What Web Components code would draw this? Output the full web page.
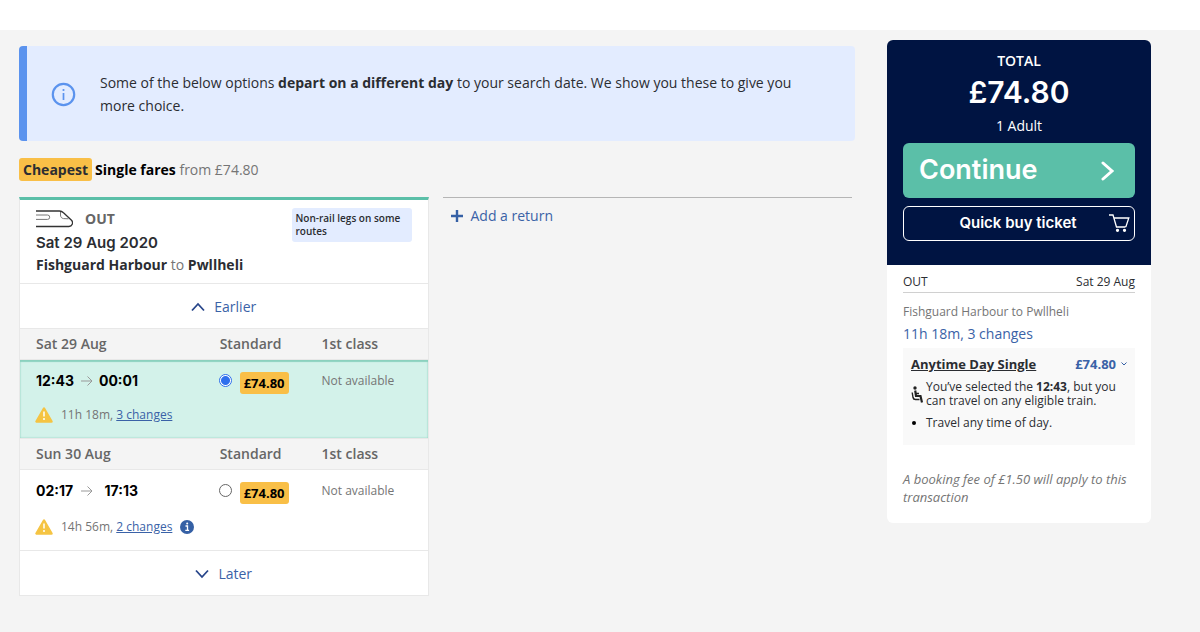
<!DOCTYPE html>
<html lang="en-GB">
<head>
<meta charset="utf-8">
<meta name="viewport" content="width=device-width, initial-scale=1">
<title>Choose your tickets</title>
<style>
  :root {
    --ink: #2b2d32;
    --grey: #757575;
    --blue: #3a62a7;
    --navy: #001442;
    --green: #5bbfa8;
    --amber: #f9bf47;
    --ice: #e3ecff;
    --line: #e8e8e8;
    --display: Inter, "Liberation Sans", sans-serif;
  }
  body {
    margin: 0;
    background: #f4f4f4;
    color: var(--ink);
    font: 14px/20px "Open Sans", "Noto Sans", sans-serif;
  }
</style>
</head>
<body>
<ticket-page>
  <info-banner>Some of the below options <b>depart on a different day</b> to your search date. We show you these to give you more choice.</info-banner>
  <fare-summary price="£74.80">Single fares</fare-summary>
  <journey-card slot="journey" direction="OUT" date="Sat 29 Aug 2020" from="Fishguard Harbour" to="Pwllheli" note="Non-rail legs on some routes">
    <fare-table></fare-table>
  </journey-card>
  <return-prompt slot="journey">Add a return</return-prompt>
  <basket-panel slot="basket" price="£74.80" passengers="1 Adult">
    <basket-leg direction="OUT" date="Sat 29 Aug" route="Fishguard Harbour to Pwllheli" duration="11h 18m, 3 changes" ticket="Anytime Day Single" price="£74.80">
      <span slot="seat">You’ve selected the <b>12:43</b>, but you can travel on any eligible train.</span>
      <span slot="terms">Travel any time of day.</span>
    </basket-leg>
    <span slot="fee">A booking fee of £1.50 will apply to this transaction</span>
  </basket-panel>
</ticket-page>

<script>
  class BaseElement extends HTMLElement {
    connectedCallback() {
      if (this.shadowRoot) return;
      this.attachShadow({ mode: "open" }).innerHTML =
        `<style>*{box-sizing:border-box}:host{display:block;box-sizing:border-box}button{font:inherit;cursor:pointer}${this.styles()}</style>${this.markup()}`;
    }
    attr(name) { return this.getAttribute(name) || ""; }
  }

  customElements.define("ticket-page", class extends BaseElement {
    styles() { return `
      header { height: 30px; background: #fff; }
      .page { display: flex; align-items: flex-start; gap: 32px; padding: 10px 49px 32px 19px; }
      main { flex: 1; min-width: 0; padding-top: 6px; }
      .journeys { display: grid; grid-template-columns: 1fr 1fr; gap: 14px; align-items: start; padding-right: 3px; }
      aside { flex: 0 0 264px; }`; }
    markup() { return `
      <header></header>
      <div class="page">
        <main><slot></slot><div class="journeys"><slot name="journey"></slot></div></main>
        <aside><slot name="basket"></slot></aside>
      </div>`; }
  });

  customElements.define("info-banner", class extends BaseElement {
    styles() { return `
      :host { display: flex; align-items: center; gap: 24px; padding: 25px 48px 24px 24px;
        background: var(--ice); border-left: 8px solid #5b93ee; border-radius: 4px; }
      svg { flex: none; }
      p { margin: 0; line-height: 23px; }`; }
    markup() { return `
      <svg width="25" height="25" viewBox="0 0 25 25" fill="none" stroke="#5b93ee" aria-hidden="true">
        <circle cx="12.5" cy="12.5" r="10.7" stroke-width="2.2"/>
        <path d="M12.5 11v7" stroke-width="1.7"/><circle cx="12.5" cy="8" r="1.1" fill="#5b93ee" stroke="none"/>
      </svg>
      <p><slot></slot></p>`; }
  });

  customElements.define("fare-summary", class extends BaseElement {
    styles() { return `
      :host { display: flex; align-items: center; gap: 3px; margin: 17px 0 16px; color: var(--grey); line-height: 23px; }
      .tag { padding: 0 4px; border-radius: 3px; background: var(--amber); color: var(--ink); font-weight: 700; }
      b { color: #000; }`; }
    markup() { return `<span class="tag">Cheapest</span><span><b><slot></slot></b> from ${this.attr("price")}</span>`; }
  });

  customElements.define("journey-card", class extends BaseElement {
    styles() { return `
      :host { background: #fff; border: 1px solid var(--line); border-top: 3px solid var(--green); }
      header { display: flex; justify-content: space-between; align-items: flex-start; padding: 6px 16px 7px 16px; }
      .dir { display: flex; align-items: center; gap: 12px; line-height: 25px; color: #666; font-weight: 700; }
      h2 { margin: 0; font: 600 15px/23px var(--display); }
      p { margin: 0; line-height: 22px; color: var(--grey); }
      p b { color: var(--ink); }
      .note { width: 120px; margin-top: 2px; padding: 4px; border-radius: 3px; background: var(--ice);
        font-size: 10px; line-height: 13px; font-weight: 600; }
      .more { display: flex; width: 100%; height: 45px; align-items: center; justify-content: center; gap: 9px;
        padding: 2px 0 0; background: none; border: 0; border-top: 1px solid var(--line); color: var(--blue); }`; }
    markup() { return `
      <header>
        <div>
          <div class="dir">
            <svg width="37" height="18" viewBox="0 0 37 18" fill="none" stroke="#333" stroke-width="1.3" aria-hidden="true">
              <path d="M0 1h23.500c2 0 3 .8 4 1.800l8 7.400c2.200 2.500.6 6.300-2.600 6.300H0"/>
              <path d="M0 5h11.500a2.200 2.200 0 0 1 0 4.400H0M24.500 2v3c0 2 1 3.200 3 3.600l5 .2" stroke="#777" stroke-width="1"/>
            </svg>${this.attr("direction")}
          </div>
          <h2>${this.attr("date")}</h2>
          <p><b>${this.attr("from")}</b> to <b>${this.attr("to")}</b></p>
        </div>
        <div class="note">${this.attr("note")}</div>
      </header>
      <button class="more" type="button">
        <svg width="14" height="10" viewBox="0 0 14 10" fill="none" stroke="#27458a" stroke-width="1.800" aria-hidden="true"><path d="M1 8.500 7 2l6 6.500"/></svg>Earlier
      </button>
      <slot></slot>
      <button class="more" type="button">
        <svg width="14" height="10" viewBox="0 0 14 10" fill="none" stroke="#27458a" stroke-width="1.800" aria-hidden="true"><path d="M1 1.500 7 8l6-6.500"/></svg>Later
      </button>`; }
  });

  customElements.define("fare-table", class extends BaseElement {
    styles() { return `
      table { width: 100%; table-layout: fixed; border-collapse: separate; border-spacing: 0; }
      .c1 { width: 49%; } .c2 { width: 25%; }
      th { height: 32px; padding: 0; background: #f4f4f4; border: solid var(--line); border-width: 1px 0; text-align: left; font-weight: 600; color: #666; }
      th:first-child, td:first-child { padding-left: 16px; }
      td { padding: 10px 0 11px; vertical-align: top; font-size: 12px; line-height: 22px; color: var(--grey); }
      .chosen { background: #d3f2ea; box-shadow: inset 0 0 2px #86cfbc, inset 0 2px 1px #8dd2c0; }
      .times { display: flex; align-items: center; height: 22px; gap: 5px; color: #000; font: 700 14px/22px var(--display); }
      time { min-width: 40px; }
      time:last-child { text-align: right; }
      .trip { display: flex; align-items: center; margin-top: 11px; height: 24px; }
      .trip.extra { margin-top: 13px; }
      .trip > svg:first-child { margin: 0 8px 0 -1px; }
      .tip { display: flex; margin: 0 0 0 8px; padding: 0; border: 0; background: none; }
      a { color: var(--blue); }
      label { display: flex; align-items: flex-start; gap: 8px; color: #000; font: 700 13px/22px "Open Sans", sans-serif; }
      input { appearance: none; flex: none; width: 13px; height: 13px; margin: 4px 0 0 -1px; border: 1px solid #666; border-radius: 50%; background: #fff; }
      input:checked { border-color: #2f6fed; background: radial-gradient(circle, #2f6fed 0 4px, #fff 5px); }
      .price { padding: 0 4px; margin-top: 2px; border-radius: 3px; background: var(--amber); }`; }
    row(t) { return `
      <tbody>
        <tr><th scope="col">${t.day}</th><th scope="col">Standard</th><th scope="col">1st class</th></tr>
        <tr${t.chosen ? ' class="chosen"' : ""}>
          <td>
            <div class="times"><time>${t.dep}</time>
              <svg width="12" height="12" viewBox="0 0 12 12" fill="none" stroke="#999" aria-hidden="true"><path d="M0 6h11M6.500 1.500 11 6l-4.500 4.500"/></svg>
              <time>${t.arr}</time></div>
            <div class="trip${t.tip ? " extra" : ""}">
              <svg width="18" height="16" viewBox="0 0 18 16" aria-hidden="true"><path d="M9 1.500 1.500 14.500h15z" fill="#f5c443" stroke="#f5c443" stroke-width="2.500" stroke-linejoin="round"/><path d="M9 4.500v5M9 11v2" stroke="#fff" stroke-width="1.500"/></svg>
              <span>${t.time}, <a href="#changes">${t.changes}</a></span>
              ${t.tip ? `<button class="tip" type="button" aria-label="More information"><svg width="14" height="14" viewBox="0 0 14 14" aria-hidden="true"><circle cx="7" cy="7" r="7" fill="#3560a5"/><path d="M5.500 6H7.500v4M5.300 10.300h3.800" stroke="#fff" stroke-width="1.300" fill="none"/><circle cx="7.200" cy="3.600" r="1" fill="#fff"/></svg></button>` : ""}
            </div>
          </td>
          <td><label><input type="radio" name="fare" aria-label="${t.dep} Standard ${t.price}"${t.chosen ? " checked" : ""}><span class="price">${t.price}</span></label></td>
          <td>Not available</td>
        </tr>
      </tbody>`; }
    markup() {
      const trains = [
        { day: "Sat 29 Aug", dep: "12:43", arr: "00:01", time: "11h 18m", changes: "3 changes", price: "£74.80", chosen: true },
        { day: "Sun 30 Aug", dep: "02:17", arr: "17:13", time: "14h 56m", changes: "2 changes", price: "£74.80", tip: true }
      ];
      return `<table><colgroup><col class="c1"><col class="c2"><col></colgroup>${trains.map(t => this.row(t)).join("")}</table>`;
    }
  });

  customElements.define("return-prompt", class extends BaseElement {
    styles() { return `
      :host { border-top: 1px solid #b5b5b5; padding: 8px; }
      button { display: flex; align-items: center; gap: 8px; padding: 0; border: 0; background: none; color: var(--blue); }`; }
    markup() { return `<button type="button"><svg width="12" height="12" viewBox="0 0 12 12" stroke="#3560a5" stroke-width="2.400" aria-hidden="true"><path d="M6 0v12M0 6h12"/></svg><slot></slot></button>`; }
  });

  customElements.define("basket-panel", class extends BaseElement {
    styles() { return `
      :host { overflow: hidden; border-radius: 6px; background: #fff; }
      .total { padding: 11px 16px 24px; background: var(--navy); color: #fff; text-align: center; }
      h2 { margin: 0; font-size: 14px; line-height: 20px; font-weight: 600; }
      .sum { font: 600 30px/42px var(--display); }
      .who { line-height: 26px; margin-bottom: 4px; }
      button { display: flex; width: 100%; align-items: center; border-radius: 6px; color: #fff; }
      .go { justify-content: space-between; height: 55px; padding: 0 20px 2px 16px; border: 0; background: var(--green); font: 600 27px/32px var(--display); }
      .quick { height: 35px; margin-top: 8px; padding: 0 4px 2px 24px; border: 1px solid #fff; background: none; font: 600 15px/20px var(--display); }
      .quick span { flex: 1; }
      .body { padding: 7px 16px 17px; }
      .fee { margin: 25px 0 0; color: var(--grey); font-size: 13px; line-height: 18px; font-style: italic; }`; }
    markup() { return `
      <section class="total">
        <h2>TOTAL</h2>
        <div class="sum">${this.attr("price")}</div>
        <div class="who">${this.attr("passengers")}</div>
        <button class="go" type="button">Continue<svg width="16" height="22" viewBox="0 0 16 22" fill="none" stroke="#fff" stroke-width="3" aria-hidden="true"><path d="M4 4l9 8-9 8" stroke-linecap="round"/></svg></button>
        <button class="quick" type="button"><span>Quick buy ticket</span>
          <svg width="22" height="20" viewBox="0 0 22 20" fill="none" stroke="#fff" stroke-width="1.300" aria-hidden="true"><path d="M1 2h4l3.500 12h9M5.800 5h15l-3 9"/><circle cx="9.500" cy="17.300" r="1" fill="#fff"/><circle cx="16.500" cy="17.300" r="1" fill="#fff"/></svg></button>
      </section>
      <section class="body"><slot></slot><p class="fee"><slot name="fee"></slot></p></section>`; }
  });

  customElements.define("basket-leg", class extends BaseElement {
    styles() { return `
      :host { font-size: 12px; }
      .head { display: flex; justify-content: space-between; border-bottom: 1px solid #d0d0d0; }
      .route { margin: 9px 0 0; line-height: 20px; color: var(--grey); }
      .plain { display: block; padding: 0; border: 0; background: none; color: var(--blue); font-size: 14px; line-height: 23px; }
      .ticket { margin-top: 3px; padding: 6px 8px 7px; background: #f9f9f9; }
      .name { display: flex; justify-content: space-between; align-items: center; font-size: 13px; font-weight: 700; }
      .name a { color: var(--ink); }
      .name button { display: flex; align-items: center; gap: 5px; padding: 0; border: 0; background: none; color: var(--blue); font-weight: 700; }
      ul { margin: 6px 0 0; padding: 0; list-style: none; line-height: 14px; }
      li { display: flex; align-items: center; gap: 3px; margin-bottom: 8px; }
      li svg { flex: none; }`; }
    markup() { return `
      <div class="head"><span>${this.attr("direction")}</span><span>${this.attr("date")}</span></div>
      <p class="route">${this.attr("route")}</p>
      <button class="plain" type="button">${this.attr("duration")}</button>
      <div class="ticket">
        <div class="name"><a href="#conditions">${this.attr("ticket")}</a>
          <button type="button">${this.attr("price")}<svg width="6" height="4" viewBox="0 0 6 4" fill="none" stroke="#3560a5" aria-hidden="true"><path d="M.5.5 3 3 5.500.5"/></svg></button></div>
        <ul>
          <li><svg width="12" height="17" viewBox="0 0 12 17" aria-hidden="true"><circle cx="4" cy="2" r="1.700" fill="#222"/><path d="M4.200 4.500 5 10h4.500l1.500 6.500" fill="none" stroke="#222" stroke-width="2.200"/><path d="M4.500 7.500H8M1.200 6.500l.8 5c.3 1.500 1 2 2.500 2h4" fill="none" stroke="#222" stroke-width="1.400"/></svg><slot name="seat"></slot></li>
          <li><svg width="12" height="14" viewBox="0 0 12 14" aria-hidden="true"><circle cx="3" cy="7" r="2" fill="#000"/></svg><slot name="terms"></slot></li>
        </ul>
      </div>`; }
  });
</script>
</body>
</html>
